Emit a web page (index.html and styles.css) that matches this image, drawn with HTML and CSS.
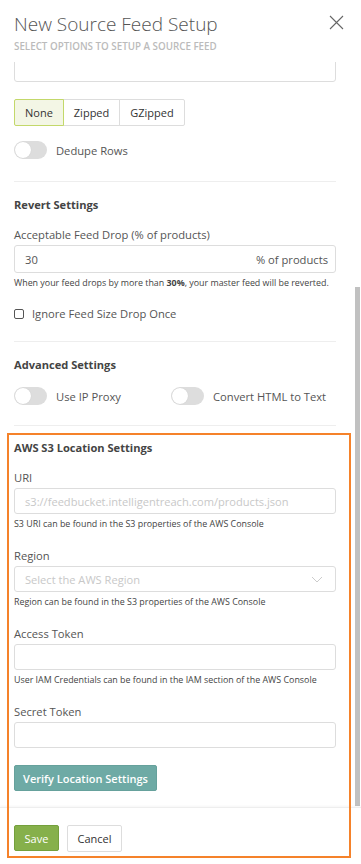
FILE: index.html
```html
<!DOCTYPE html>
<html>
<head>
<meta charset="utf-8">
<link rel="stylesheet" href="styles.css">
</head>
<body>
<div class="modal">
  <header class="modal-header">
    <div class="titles">
      <h1 class="title">New Source Feed Setup</h1>
      <p class="subtitle">SELECT OPTIONS TO SETUP A SOURCE FEED</p>
    </div>
    <button class="close" aria-label="Close">
      <svg width="15" height="15" viewBox="0 0 15 15"><path d="M1 1 L14 14 M14 1 L1 14" stroke="#666" stroke-width="1.1" fill="none"/></svg>
    </button>
  </header>

  <div class="modal-body">
    <div class="content">
      <div class="input partial"></div>

      <div class="btn-group">
        <button class="seg active">None</button>
        <button class="seg">Zipped</button>
        <button class="seg">GZipped</button>
      </div>

      <div class="toggle-row">
        <label class="toggle"><span class="switch"><span class="knob"></span></span><span class="toggle-label">Dedupe Rows</span></label>
      </div>

      <hr class="divider first">

      <h2 class="section-title">Revert Settings</h2>
      <div class="field">
        <label class="label">Acceptable Feed Drop (% of products)</label>
        <div class="input with-suffix"><span class="value">30</span><span class="suffix">% of products</span></div>
        <p class="help">When your feed drops by more than <b>30%</b>, your master feed will be reverted.</p>
      </div>
      <label class="check"><span class="box"></span><span>Ignore Feed Size Drop Once</span></label>

      <hr class="divider">

      <h2 class="section-title">Advanced Settings</h2>
      <div class="toggle-row two">
        <label class="toggle"><span class="switch"><span class="knob"></span></span><span class="toggle-label">Use IP Proxy</span></label>
        <label class="toggle"><span class="switch"><span class="knob"></span></span><span class="toggle-label">Convert HTML to Text</span></label>
      </div>

      <hr class="divider">

      <h2 class="section-title aws">AWS S3 Location Settings</h2>
      <div class="field">
        <label class="label">URI</label>
        <div class="input"><span class="placeholder">s3://feedbucket.intelligentreach.com/products.json</span></div>
        <p class="help">S3 URI can be found in the S3 properties of the AWS Console</p>
      </div>
      <div class="field">
        <label class="label">Region</label>
        <div class="input select"><span class="placeholder">Select the AWS Region</span>
          <svg width="12" height="7" viewBox="0 0 12 7"><path d="M1 1 L6 6 L11 1" stroke="#ccc" stroke-width="1" fill="none"/></svg>
        </div>
        <p class="help">Region can be found in the S3 properties of the AWS Console</p>
      </div>
      <div class="field">
        <label class="label">Access Token</label>
        <div class="input"></div>
        <p class="help">User IAM Credentials can be found in the IAM section of the AWS Console</p>
      </div>
      <div class="field">
        <label class="label">Secret Token</label>
        <div class="input"></div>
      </div>
      <button class="btn-verify">Verify Location Settings</button>
    </div>
    <div class="scroll-thumb"></div>
  </div>

  <footer class="modal-footer">
    <button class="btn-save">Save</button>
    <button class="btn-cancel">Cancel</button>
  </footer>

  <div class="highlight"></div>
</div>
</body>
</html>
```

FILE: styles.css
```css
* { box-sizing: border-box; }
html, body { margin: 0; padding: 0; background: #fff; }
body { font-family: "Open Sans", "Noto Sans", sans-serif; color: #555; }

.modal {
  position: relative;
  width: 361px;
  height: 864px;
  display: flex;
  flex-direction: column;
  overflow: hidden;
}

.modal-header {
  display: flex;
  justify-content: space-between;
  align-items: flex-start;
  padding: 11px 17px 0 14px;
  height: 62px;
  flex: none;
  background: #fff;
  position: relative;
  z-index: 2;
}
.title {
  margin: 0;
  font-size: 19px;
  font-weight: 300;
  line-height: 26px;
  color: #555;
}
.subtitle {
  margin: 3px 0 0;
  font-size: 9.8px;
  font-weight: 600;
  color: #bbb;
  line-height: 13px;
}
.close {
  border: 0;
  background: none;
  padding: 0;
  margin-top: 4px;
  width: 15px;
  height: 15px;
  display: block;
}
.close svg { display: block; }

.modal-body {
  position: relative;
  flex: 1;
  overflow: hidden;
}
.content {
  padding: 0 25px 0 14px;
  margin-top: -6px;
}
.scroll-thumb {
  position: absolute;
  right: 1px;
  top: 225px;
  width: 5px;
  height: 519px;
  background: #c1c1c1;
}

.input {
  height: 26px;
  border: 1px solid #ddd;
  border-radius: 3px;
  display: flex;
  align-items: center;
  padding: 0 10px;
  font-size: 11.2px;
  color: #555;
  background: #fff;
}
.placeholder { color: #c8c8c8; font-size: 11.1px; white-space: nowrap; }
.with-suffix { justify-content: space-between; padding: 0 7px 0 10px; height: 28px; }
.suffix { font-size: 11.2px; color: #555; }
.select { justify-content: space-between; padding-right: 12px; }
.select svg { display: block; }

.btn-group {
  display: flex;
  margin-top: 17px;
}
.seg {
  font-family: inherit;
  font-size: 11px;
  color: #333;
  background: #fff;
  border: 1px solid #ddd;
  height: 27px;
  padding: 0 10px;
  margin-left: -1px;
  line-height: 24px;
}
.seg:first-child { margin-left: 0; border-radius: 2px 0 0 2px; }
.seg:last-child { border-radius: 0 2px 2px 0; }
.seg.active {
  background: #f3f6e5;
  border-color: #c3d86a;
  position: relative;
  z-index: 1;
}

.toggle-row {
  display: flex;
  margin-top: 15px;
  height: 18px;
  align-items: center;
}
.toggle-row.two { margin-top: 15px; }
.toggle-row.two .toggle:first-child { width: 157px; }
.toggle {
  display: flex;
  align-items: center;
  font-size: 11.2px;
  color: #555;
}
.switch {
  width: 33px;
  height: 18px;
  border-radius: 9px;
  background: #ddd;
  position: relative;
  display: block;
  flex: none;
}
.knob {
  position: absolute;
  left: 1px;
  top: 1px;
  width: 16px;
  height: 16px;
  border-radius: 50%;
  background: #fff;
  box-shadow: 0 0 1px rgba(0,0,0,0.15);
}
.toggle-label { margin-left: 9px; }

.divider {
  border: 0;
  border-top: 1px solid #eee;
  margin: 20px 0 0;
  height: 0;
}
.divider.first { margin-top: 22px; }

.section-title {
  margin: 15px 0 0;
  font-size: 11.1px;
  font-weight: 700;
  color: #444;
  line-height: 15px;
}
.section-title.aws { margin-top: 14px; }

.field { margin-top: 15px; }
.field + .field { margin-top: 18px; }
.label {
  display: block;
  font-size: 11.2px;
  line-height: 16px;
  color: #555;
  margin-bottom: 2px;
}
.help {
  margin: 4px 0 0;
  font-size: 8.9px;
  line-height: 12px;
  color: #444;
}
.help b { font-weight: 700; }

.check {
  display: flex;
  align-items: center;
  margin-top: 17px;
  font-size: 11.2px;
  color: #555;
}
.box {
  width: 10px;
  height: 10px;
  border: 1px solid #555;
  border-radius: 2px;
  margin-right: 8px;
}

.btn-verify {
  margin-top: 17px;
  font-family: inherit;
  font-size: 11px;
  font-weight: 600;
  color: #fff;
  background: #6eaaa5;
  border: 1px solid #66a19c;
  border-radius: 2px;
  height: 26px;
  width: 143px;
  padding: 0;
  display: block;
}

.modal-footer {
  height: 57px;
  flex: none;
  border-top: 1px solid #eee;
  box-shadow: 0 -1px 2px rgba(0,0,0,0.04);
  display: flex;
  align-items: flex-start;
  padding: 17px 14px 0;
  gap: 8px;
  position: relative;
  z-index: 2;
  background: #fff;
}
.btn-save {
  font-family: inherit;
  font-size: 11px;
  color: #fff;
  background: #86b04b;
  border: 1px solid #74a03c;
  border-radius: 2px;
  height: 26px;
  width: 45px;
  padding: 0;
}
.btn-cancel {
  font-family: inherit;
  font-size: 11px;
  color: #333;
  background: #fff;
  border: 1px solid #ddd;
  border-radius: 2px;
  height: 27px;
  width: 55px;
  padding: 0;
}

.highlight {
  position: absolute;
  left: 7px;
  top: 433px;
  width: 344px;
  height: 425px;
  border: 2px solid #f5822a;
  pointer-events: none;
  z-index: 3;
}
```
